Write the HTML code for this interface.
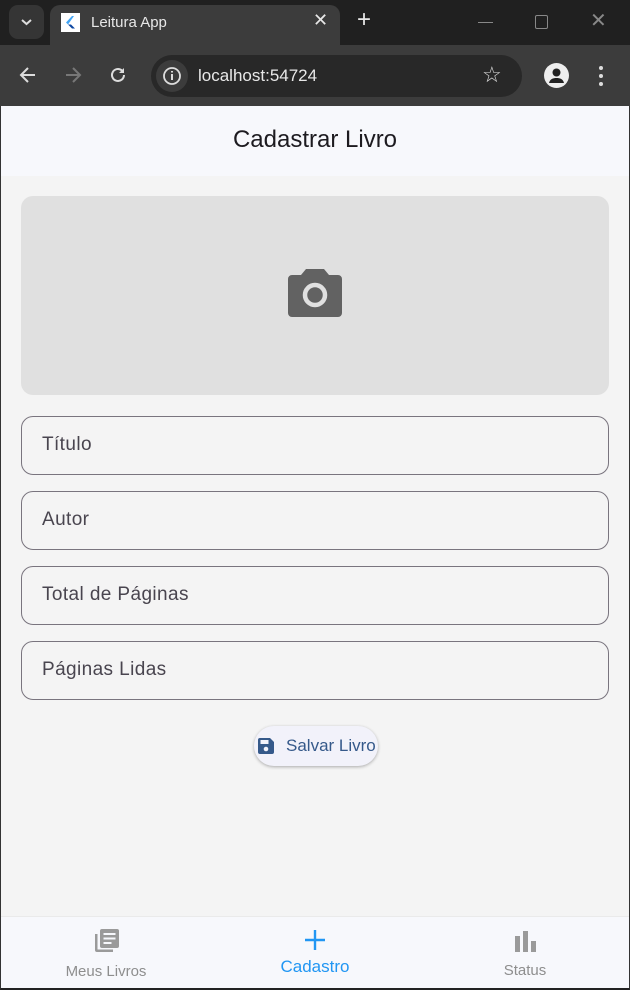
<!DOCTYPE html>
<html><head><meta charset="utf-8"><style>
*{box-sizing:border-box;margin:0;padding:0}
body{width:630px;height:990px;overflow:hidden;background:#202020;font-family:"Liberation Sans",sans-serif;position:relative}
.tabbar{position:absolute;left:0;top:0;width:630px;height:45px;background:#202020}
.tabbtn{position:absolute;left:9px;top:5px;width:35px;height:34px;border-radius:9px;background:#353535}
.tab{position:absolute;left:50px;top:5px;width:290px;height:42px;background:#3c3c3c;border-radius:10px 10px 0 0}
.toolbar{position:absolute;left:0;top:45px;width:630px;height:61px;background:#3c3c3c}
.omni{position:absolute;left:151px;top:10px;width:371px;height:42px;border-radius:21px;background:#282828}
.page{position:absolute;left:0;top:106px;width:630px;height:884px;background:#f4f4f4;border-left:1px solid #333;border-right:1px solid #333;border-bottom:2px solid #222}
.appbar{position:absolute;left:0;top:0;width:628px;height:70px;background:#f7f8fc;text-align:center;font-size:24px;line-height:68px;color:#1d1b20}
.img{position:absolute;left:20px;top:90px;width:588px;height:199px;background:#e0e0e0;border-radius:12px}
.f{position:absolute;left:20px;width:588px;height:59px;border:1.2px solid #79747e;border-radius:12px;font-size:19px;color:#49454f;padding-left:20px;line-height:56px;letter-spacing:.4px}
.btn{position:absolute;left:253px;top:620px;width:124px;height:40px;border-radius:20px;background:#f2f2fa;box-shadow:0 1px 3px rgba(0,0,0,.3);color:#35598a;font-size:17px;line-height:40px;padding-left:32px}
.nav{position:absolute;left:0;top:810px;width:628px;height:72px;background:#f7f8fc;border-top:1px solid #eaeaea}
.ni{position:absolute;top:0;width:200px;text-align:center;font-size:15px;color:#8e8e8e}
</style></head><body>
<div class="tabbar">
<div class="tabbtn"><svg width="35" height="34"><path d="M13 15l4.5 4 4.5-4" stroke="#ddd" stroke-width="2" fill="none"/></svg></div>
<div class="tab">
<div style="position:absolute;left:11px;top:8px;width:19px;height:19px;background:#fff"><svg width="19" height="19"><path d="M11 3L5 9.5l2 2L13 3z" fill="#42a5f5"/><path d="M7 11.5l4 4h3l-4-4z" fill="#0d47a1"/></svg></div>
<div style="position:absolute;left:41px;top:9px;color:#e8e8e8;font-size:15px">Leitura App</div>
<div style="position:absolute;left:263px;top:5px;color:#e8e8e8;font-size:18px">✕</div>
</div>
<div style="position:absolute;left:357px;top:6px;color:#e8e8e8;font-size:24px">+</div>
<div style="position:absolute;left:478px;top:22px;width:15px;height:1px;background:#888"></div>
<div style="position:absolute;left:535px;top:15px;width:13px;height:14px;border:1px solid #888;border-radius:2px"></div>
<div style="position:absolute;left:590px;top:8px;color:#888;font-size:20px">✕</div>
</div>
<div class="toolbar">
<svg style="position:absolute;left:18px;top:20px" width="20" height="20"><path d="M17 10H4M10 3L3 10l7 7" stroke="#ddd" stroke-width="2" fill="none"/></svg>
<svg style="position:absolute;left:63px;top:20px" width="20" height="20"><path d="M3 10h13M10 3l7 7-7 7" stroke="#777" stroke-width="2" fill="none"/></svg>
<svg style="position:absolute;left:108px;top:20px" width="20" height="20"><path d="M16 10a6 6 0 1 1-2-4.5" stroke="#ddd" stroke-width="2" fill="none"/><path d="M16 3v5h-5z" fill="#ddd"/></svg>
<div class="omni">
<div style="position:absolute;left:5px;top:5px;width:32px;height:32px;border-radius:16px;background:#3c3c3c"><svg width="32" height="32"><circle cx="16" cy="16" r="8" stroke="#ddd" stroke-width="1.8" fill="none"/><path d="M16 14v6M16 11v1.5" stroke="#ddd" stroke-width="2"/></svg></div>
<div style="position:absolute;left:47px;top:11px;color:#e8e8e8;font-size:17px">localhost:54724</div>
<div style="position:absolute;left:331px;top:7px;color:#ddd;font-size:22px">☆</div>
</div>
<div style="position:absolute;left:544px;top:18px;width:25px;height:25px;border-radius:13px;background:#eee;overflow:hidden"><svg width="25" height="25"><circle cx="12.5" cy="9.5" r="4" fill="#222"/><path d="M5 20c1-4 4-5 7.5-5s6.5 1 7.5 5z" fill="#222"/></svg></div>
<svg style="position:absolute;left:597px;top:20px" width="8" height="22"><circle cx="4" cy="3" r="2" fill="#ddd"/><circle cx="4" cy="11" r="2" fill="#ddd"/><circle cx="4" cy="19" r="2" fill="#ddd"/></svg>
</div>
<div class="page">
<div class="appbar">Cadastrar Livro</div>
<div class="img"><svg style="position:absolute;left:267px;top:72px" width="54" height="50" viewBox="0 0 54 50"><path d="M18 1h18l5 6h9a4 4 0 0 1 4 4v34a4 4 0 0 1-4 4H4a4 4 0 0 1-4-4V11a4 4 0 0 1 4-4h9z" fill="#626262"/><circle cx="27" cy="27" r="10" stroke="#e0e0e0" stroke-width="4.5" fill="none"/></svg></div>
<div class="f" style="top:310px">Título</div>
<div class="f" style="top:385px">Autor</div>
<div class="f" style="top:460px">Total de Páginas</div>
<div class="f" style="top:535px">Páginas Lidas</div>
<div class="btn"><svg style="position:absolute;left:3px;top:11px" width="18" height="18" viewBox="0 0 18 18"><path d="M1 3a2 2 0 0 1 2-2h10l4 4v10a2 2 0 0 1-2 2H3a2 2 0 0 1-2-2z" fill="#35598a"/><rect x="3.5" y="3" width="8" height="4" fill="#f2f2fa"/><circle cx="9" cy="12" r="2.3" fill="#f2f2fa"/></svg>Salvar Livro</div>
<div class="nav">
<div class="ni" style="left:5px"><svg style="margin-top:10px" width="28" height="28" viewBox="0 0 28 28"><path d="M3 7v16a2 2 0 0 0 2 2h16v-2.5H5.5V7z" fill="#9a9a9a"/><rect x="8" y="2" width="19" height="19" rx="2" fill="#9a9a9a"/><path d="M11.5 7h12M11.5 11.5h12M11.5 16h8" stroke="#f7f8fc" stroke-width="2"/></svg><div style="margin-top:4px">Meus Livros</div></div>
<div class="ni" style="left:214px;color:#2196f3"><svg style="margin-top:12px" width="22" height="22"><path d="M11 1v20M1 11h20" stroke="#2196f3" stroke-width="2.4"/></svg><div style="margin-top:2px;font-size:17px">Cadastro</div></div>
<div class="ni" style="left:424px"><svg style="margin-top:13px" width="22" height="22"><rect x="1" y="6" width="5" height="16" fill="#9a9a9a"/><rect x="9" y="1" width="5" height="21" fill="#9a9a9a"/><rect x="17" y="11" width="5" height="11" fill="#9a9a9a"/></svg><div style="margin-top:6px">Status</div></div>
</div>
</div>
</body></html>
